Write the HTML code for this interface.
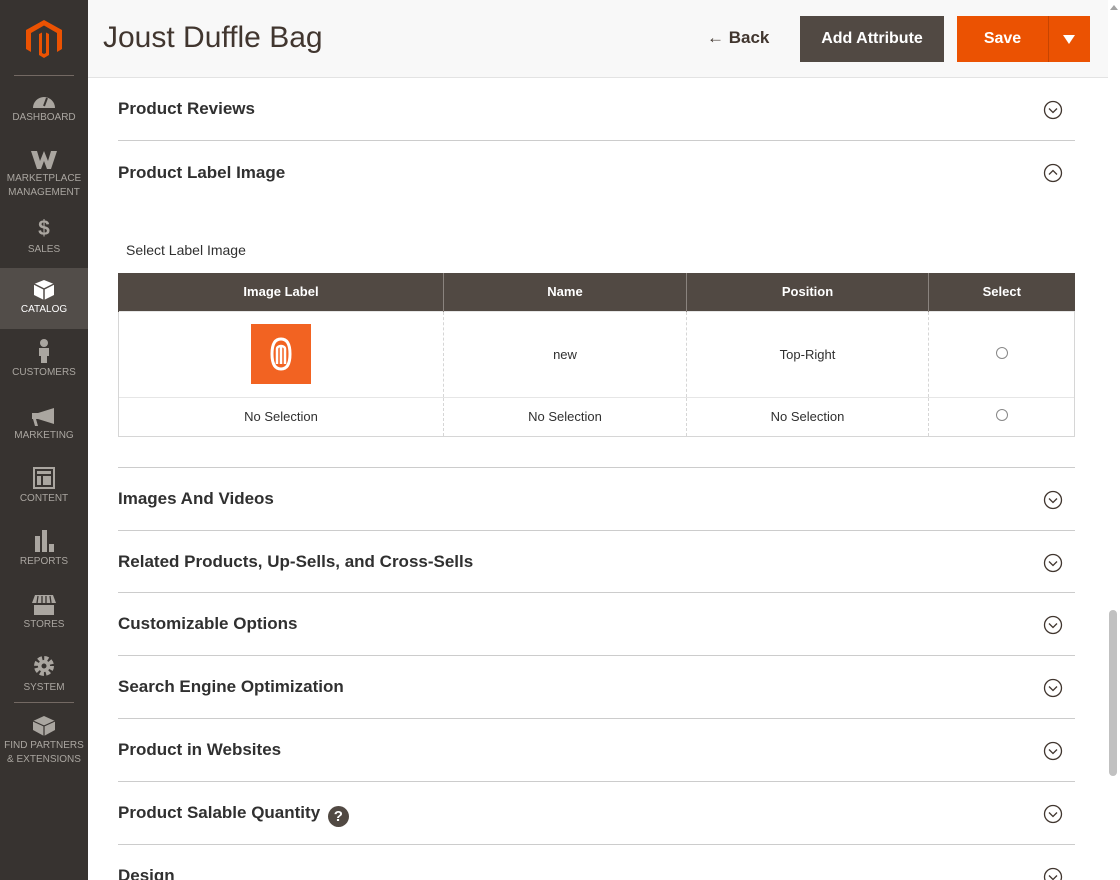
<!DOCTYPE html>
<html><head><style>
*{box-sizing:border-box;margin:0;padding:0}
html,body{width:1120px;height:880px;overflow:hidden}
body{font-family:"Liberation Sans",sans-serif;background:#fff;position:relative;color:#303030}
.sb{position:absolute;left:0;top:0;width:88px;height:880px;background:#373330}
.logo{position:absolute;left:26px;top:20px}
.sep{position:absolute;left:14px;width:60px;height:1px;background:#736963}
.it{position:absolute;left:0;width:88px;text-align:center;color:#aaa6a0;font-size:10px;line-height:14px}
.it svg{display:block;margin:0 auto 3px}
.it.act{background:#524d49;color:#fff}
.hdr{position:absolute;left:88px;top:0;width:1020px;height:78px;background:#f8f8f8;border-bottom:1px solid #e3e3e3}
.title{position:absolute;left:15px;top:21px;font-size:30px;color:#41362f;font-weight:normal}
.back{position:absolute;left:619px;top:28px;font-size:17px;font-weight:bold;color:#41362f}
.add{position:absolute;left:712px;top:16px;width:144px;height:46px;background:#514943;color:#fff;font-weight:bold;font-size:16px;text-align:center;line-height:46px}
.save{position:absolute;left:869px;top:16px;width:133px;height:46px;background:#eb5202;color:#fff;font-weight:bold;font-size:16px}
.save span{position:absolute;left:0;width:91px;text-align:center;line-height:46px}
.save i{position:absolute;left:91px;top:0;width:1px;height:46px;background:#c74400}
.sec{position:absolute;left:118px;width:957px;height:63px;border-bottom:1px solid #ccc}
.sec b{position:absolute;left:0;top:21px;font-size:17px;color:#303030}
.chev{position:absolute;left:925px;top:22px}
.scr{position:absolute;left:1108px;top:0;width:12px;height:880px;background:#fff}
.th{position:absolute;left:1px;top:610px;width:8px;height:166px;background:#c1c1c1;border-radius:4px}
table{position:absolute;left:118px;top:273px;width:957px;border-collapse:collapse;font-size:13px;text-align:center}
th{background:#514943;color:#fff;height:38px;font-size:13px;border-left:1px solid #8a837e}
th:first-child{border-left:1px solid #514943}
td{border:1px dashed #d6d6d6;border-top:1px solid #e6e6e6}
tr:last-child td{border-bottom:1px solid #d6d6d6}
td:first-child{border-left:1px solid #d6d6d6}td:last-child{border-right:1px solid #d6d6d6}
.rad{display:inline-block;width:12px;height:12px;border:1px solid #888;border-radius:50%}
</style></head><body>
<div class="sb">
<svg class="logo" width="36" height="38" viewBox="0 0 36 38"><path d="M18 0L36 10V29L31 32V13L18 5.5 5 13V32L0 29V10Z" fill="#eb5202"/><path d="M18 38L13 35V14L16 12.5V33L18 34 20 33V12.5L23 14V35Z" fill="#eb5202"/></svg>
<div class="sep" style="top:75px"></div>
<div class="it" style="top:92px"><svg width="24" height="16" viewBox="0 0 24 16"><path d="M1 16A11 11 0 0 1 23 16Z" fill="#aaa6a0"/><path d="M12 14L15 6" stroke="#373330" stroke-width="2"/></svg>DASHBOARD</div>
<div class="it" style="top:151px"><svg width="26" height="18" viewBox="0 0 26 18"><path d="M0 0H6L9 10 13 0 17 10 20 0H26L20 18H16L13 10 10 18H6Z" fill="#aaa6a0"/></svg>MARKETPLACE<br>MANAGEMENT</div>
<div class="it" style="top:218px"><div style="font-size:21px;font-weight:bold;line-height:22px;margin-bottom:3px">$</div>SALES</div>
<div class="it act" style="top:268px;height:61px;padding-top:12px"><svg width="22" height="20" viewBox="0 0 22 20"><path d="M11 0L21 4V15L11 20 1 15V4Z" fill="#fff"/><path d="M1 4L11 9 21 4M11 9V20" stroke="#524d49" stroke-width="1.5" fill="none"/></svg>CATALOG</div>
<div class="it" style="top:339px"><svg width="12" height="24" viewBox="0 0 12 24"><circle cx="6" cy="4" r="4" fill="#aaa6a0"/><path d="M1 9H11V17H9V24H3V17H1Z" fill="#aaa6a0"/></svg>CUSTOMERS</div>
<div class="it" style="top:408px"><svg width="24" height="18" viewBox="0 0 24 18"><path d="M0 5H6L22 0V16L6 11H4L6 18H3L1 11H0Z" fill="#aaa6a0"/></svg>MARKETING</div>
<div class="it" style="top:467px"><svg width="22" height="22" viewBox="0 0 22 22"><rect x="1" y="1" width="20" height="20" fill="none" stroke="#aaa6a0" stroke-width="2"/><rect x="4" y="4" width="14" height="3" fill="#aaa6a0"/><rect x="4" y="9" width="4" height="9" fill="#aaa6a0"/><rect x="10" y="9" width="8" height="9" fill="#aaa6a0"/></svg>CONTENT</div>
<div class="it" style="top:530px"><svg width="20" height="22" viewBox="0 0 20 22"><rect x="1" y="6" width="5" height="16" fill="#aaa6a0"/><rect x="8" y="0" width="5" height="22" fill="#aaa6a0"/><rect x="15" y="14" width="5" height="8" fill="#aaa6a0"/></svg>REPORTS</div>
<div class="it" style="top:595px"><svg width="24" height="20" viewBox="0 0 24 20"><path d="M3 0H21L24 8H0Z M2 10H22V20H2Z" fill="#aaa6a0"/><path d="M6 1L5 8M10 1V8M14 1V8M18 1L19 8" stroke="#373330" stroke-width="1.3"/></svg>STORES</div>
<div class="it" style="top:654px"><svg width="24" height="24" viewBox="0 0 24 24"><circle cx="12" cy="12" r="7" fill="none" stroke="#aaa6a0" stroke-width="6" stroke-dasharray="3.6 1.9"/><circle cx="12" cy="12" r="6" fill="#aaa6a0"/><circle cx="12" cy="12" r="2.5" fill="#373330"/></svg>SYSTEM</div>
<div class="sep" style="top:702px"></div>
<div class="it" style="top:714px"><svg width="24" height="22" viewBox="0 0 24 22"><path d="M12 2L23 7V16L12 22 1 16V7Z" fill="#aaa6a0"/><path d="M1 7L12 12 23 7M12 12V22" stroke="#373330" stroke-width="1.2" fill="none"/></svg>FIND PARTNERS<br>&amp; EXTENSIONS</div>
</div>
<div class="hdr">
<div class="title">Joust Duffle Bag</div>
<div class="back">&#8592; Back</div>
<div class="add">Add Attribute</div>
<div class="save"><span>Save</span><i></i><svg style="position:absolute;left:106px;top:19px" width="12" height="9" viewBox="0 0 12 9"><path d="M0 0H12L6 9Z" fill="#fff"/></svg></div>
</div>
<div class="sec" style="top:78px"><b>Product Reviews</b><svg class="chev" width="20" height="20" viewBox="0 0 20 20"><circle cx="10" cy="10" r="8.5" fill="none" stroke="#41362f" stroke-width="1.3"/><path d="M6 8.5L10 12.5 14 8.5" fill="none" stroke="#41362f" stroke-width="1.3"/></svg></div>
<div style="position:absolute;left:118px;top:141px;width:957px;height:327px;border-bottom:1px solid #ccc">
<b style="position:absolute;left:0;top:22px;font-size:17px">Product Label Image</b>
<svg style="position:absolute;left:925px;top:22px" width="20" height="20" viewBox="0 0 20 20"><circle cx="10" cy="10" r="8.5" fill="none" stroke="#41362f" stroke-width="1.3"/><path d="M6 11.5L10 7.5 14 11.5" fill="none" stroke="#41362f" stroke-width="1.3"/></svg>
<div style="position:absolute;left:8px;top:101px;font-size:14px">Select Label Image</div>
</div>
<table>
<tr><th style="width:325px">Image Label</th><th style="width:243px">Name</th><th style="width:242px">Position</th><th>Select</th></tr>
<tr style="height:86px"><td><svg width="60" height="60" viewBox="0 0 60 60" style="display:block;margin:0 auto"><rect width="60" height="60" fill="#f26322"/><path d="M30 15C23 15 21 22 21 30 21 38 23 45 30 45 37 45 39 38 39 30 39 22 37 15 30 15Z" fill="none" stroke="#fff" stroke-width="3"/><path d="M26 40V25C26 21 34 21 34 25V40M30 23V40" fill="none" stroke="#fff" stroke-width="2.5"/></svg></td><td>new</td><td>Top-Right</td><td><span class="rad"></span></td></tr>
<tr style="height:39px"><td>No Selection</td><td>No Selection</td><td>No Selection</td><td><span class="rad"></span></td></tr>
</table>
<div class="sec" style="top:468px"><b>Images And Videos</b><svg class="chev" width="20" height="20" viewBox="0 0 20 20"><circle cx="10" cy="10" r="8.5" fill="none" stroke="#41362f" stroke-width="1.3"/><path d="M6 8.5L10 12.5 14 8.5" fill="none" stroke="#41362f" stroke-width="1.3"/></svg></div>
<div class="sec" style="top:531px;height:62px"><b>Related Products, Up-Sells, and Cross-Sells</b><svg class="chev" width="20" height="20" viewBox="0 0 20 20"><circle cx="10" cy="10" r="8.5" fill="none" stroke="#41362f" stroke-width="1.3"/><path d="M6 8.5L10 12.5 14 8.5" fill="none" stroke="#41362f" stroke-width="1.3"/></svg></div>
<div class="sec" style="top:593px"><b>Customizable Options</b><svg class="chev" width="20" height="20" viewBox="0 0 20 20"><circle cx="10" cy="10" r="8.5" fill="none" stroke="#41362f" stroke-width="1.3"/><path d="M6 8.5L10 12.5 14 8.5" fill="none" stroke="#41362f" stroke-width="1.3"/></svg></div>
<div class="sec" style="top:656px"><b>Search Engine Optimization</b><svg class="chev" width="20" height="20" viewBox="0 0 20 20"><circle cx="10" cy="10" r="8.5" fill="none" stroke="#41362f" stroke-width="1.3"/><path d="M6 8.5L10 12.5 14 8.5" fill="none" stroke="#41362f" stroke-width="1.3"/></svg></div>
<div class="sec" style="top:719px"><b>Product in Websites</b><svg class="chev" width="20" height="20" viewBox="0 0 20 20"><circle cx="10" cy="10" r="8.5" fill="none" stroke="#41362f" stroke-width="1.3"/><path d="M6 8.5L10 12.5 14 8.5" fill="none" stroke="#41362f" stroke-width="1.3"/></svg></div>
<div class="sec" style="top:782px"><b>Product Salable Quantity <span style="display:inline-block;width:21px;height:21px;border-radius:50%;background:#514943;color:#fff;text-align:center;line-height:21px;font-size:15px;vertical-align:-3px;margin-left:3px">?</span></b><svg class="chev" width="20" height="20" viewBox="0 0 20 20"><circle cx="10" cy="10" r="8.5" fill="none" stroke="#41362f" stroke-width="1.3"/><path d="M6 8.5L10 12.5 14 8.5" fill="none" stroke="#41362f" stroke-width="1.3"/></svg></div>
<div class="sec" style="top:845px;height:35px;border:none;overflow:hidden"><b>Design</b><svg class="chev" width="20" height="20" viewBox="0 0 20 20"><circle cx="10" cy="10" r="8.5" fill="none" stroke="#41362f" stroke-width="1.3"/><path d="M6 8.5L10 12.5 14 8.5" fill="none" stroke="#41362f" stroke-width="1.3"/></svg></div>
<div class="scr"><div class="th"></div><svg style="position:absolute;left:2px;top:5px" width="8" height="5"><path d="M0 5L4 0 8 5Z" fill="#a3a3a3"/></svg></div>
</body></html>
